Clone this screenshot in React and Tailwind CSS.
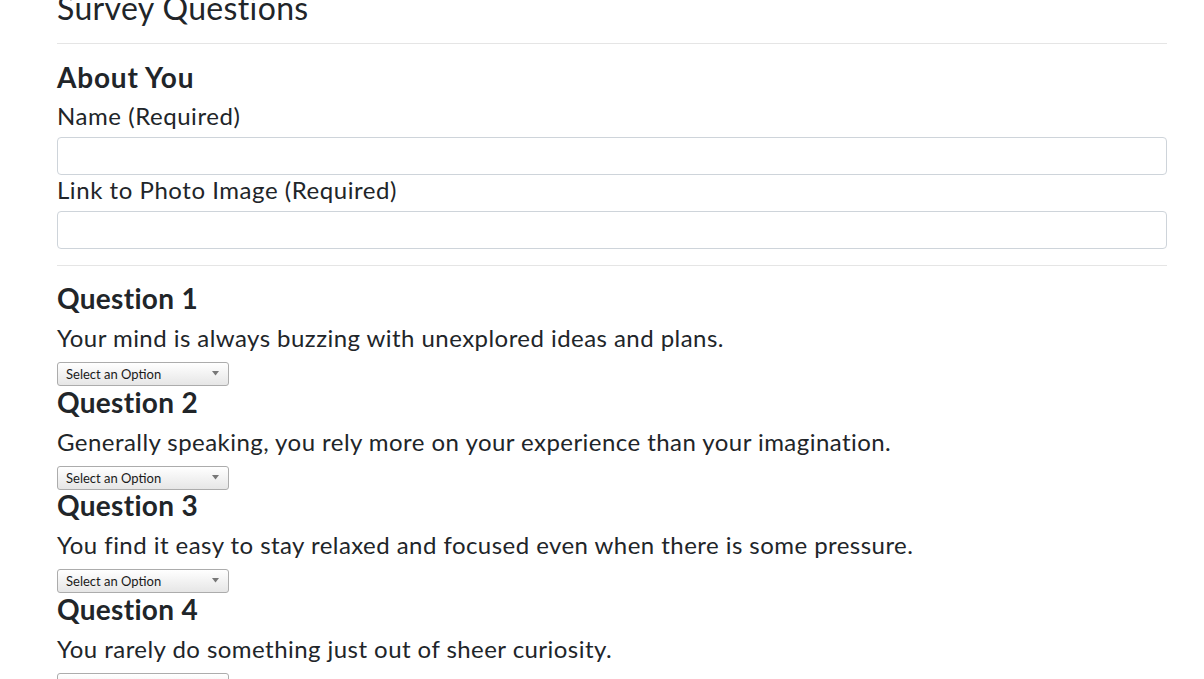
import React from "react";

const questions = [
  "Your mind is always buzzing with unexplored ideas and plans.",
  "Generally speaking, you rely more on your experience than your imagination.",
  "You find it easy to stay relaxed and focused even when there is some pressure.",
  "You rarely do something just out of sheer curiosity.",
];

function FakeSelect() {
  return (
    <div className="relative h-[24px] w-[172px] rounded-[3px] border border-[#acacac] bg-gradient-to-b from-[#ffffff] to-[#e6e6e6] pl-[8px] text-[13px] leading-[22px] text-[#1a1a1a]">
      Select an Option
      <svg
        className="absolute right-[9px] top-[8px]"
        width="7"
        height="5"
        viewBox="0 0 7 5"
      >
        <path d="M0 0 H7 L3.5 4.5 Z" fill="#777777" />
      </svg>
    </div>
  );
}

function Hr({ className }) {
  return <div className={`h-px w-full bg-[#e5e5e5] ${className}`} />;
}

export default function App() {
  return (
    <div className="min-h-screen overflow-hidden bg-white font-['Lato','Liberation_Sans',sans-serif] text-[#212529]">
      <div className="ml-[57px] w-[1110px]">
        {/* page is scrolled a little: title is cut at the top */}
        <h2 className="-mt-[8px] text-[32px] leading-[32px] tracking-[0.35px]">Survey Questions</h2>
        <Hr className="mt-[19px]" />

        <h3 className="mt-[18px] text-[28px] font-bold leading-[30px] tracking-[0.8px]">About You</h3>
        <label className="mt-[9px] block text-[24px] leading-[29px] tracking-[0.55px]">Name (Required)</label>
        <input
          type="text"
          className="mt-[7px] block h-[38px] w-full rounded-[4px] border border-[#ced4da] bg-white px-3"
        />
        <label className="block text-[24px] leading-[29px] tracking-[0.55px]">Link to Photo Image (Required)</label>
        <input
          type="text"
          className="mt-[7px] block h-[38px] w-full rounded-[4px] border border-[#ced4da] bg-white px-3"
        />
        <Hr className="mt-[16px]" />

        <div className="mt-[17px]">
          {questions.map((q, i) => (
            <div key={i} className={i > 0 ? "mt-[0.5px]" : ""}>
              <h3 className="text-[28px] font-bold leading-[30px] tracking-[0.3px]">Question {i + 1}</h3>
              <p className="mt-[10px] text-[24px] leading-[29px] tracking-[0.45px]">{q}</p>
              <div className="mt-[10px]">
                <FakeSelect />
              </div>
            </div>
          ))}
        </div>
      </div>
    </div>
  );
}
